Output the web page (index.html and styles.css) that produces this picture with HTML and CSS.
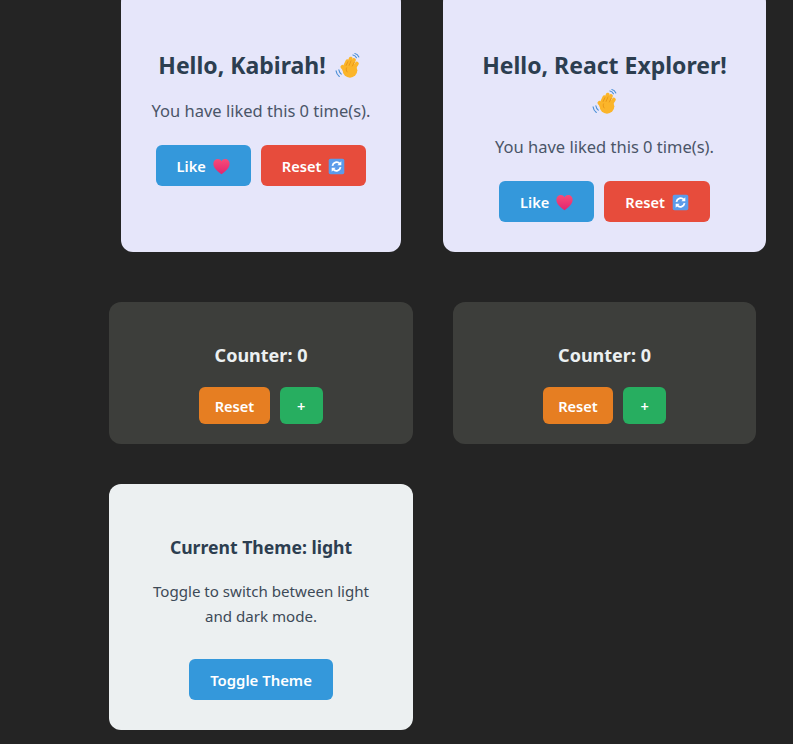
FILE: index.html
```html
<!DOCTYPE html>
<html>
<head>
    <title>React Explorer</title>
    <link rel="stylesheet" href="styles.css">
</head>
<body>
    <svg class="defs" width="0" height="0">
        <defs>
            <symbol id="wave" viewBox="0 0 24 24">
                <path d="M3.600 15.500c.3 1.700 1 3 2.200 4M1 16.500c.3 2.300 1.300 4 3 5.200" fill="none" stroke="#4a8fd6" stroke-width="1" stroke-linecap="round"/>
                <path d="M16.500 1.800c1.400.2 2.600 1.100 3.300 2.500M18.300.5c1.700.3 3 1.500 3.700 3.200" fill="none" stroke="#4a8fd6" stroke-width="1" stroke-linecap="round"/>
                <g fill="none" stroke="#fbb52a" stroke-width="3.500" stroke-linecap="round">
                    <path d="M8.500 14L11.500 7.500"/>
                    <path d="M11.500 13L14.500 5.200"/>
                    <path d="M14.500 13L17.500 6.500"/>
                    <path d="M17 14.500L20.200 9.800"/>
                    <path d="M11 18L6.800 12.800"/>
                </g>
                <circle cx="13.800" cy="16" r="6.800" fill="#fbb52a"/>
                <path d="M10.300 11.500l1.600-3.400M13 11.500l1.800-4.200M16 12l1.600-3.200M11.200 17.500c-1-1.200-1.100-2.600-.5-3.800" fill="none" stroke="#e38f12" stroke-width=".7" stroke-linecap="round"/>
            </symbol>
            <linearGradient id="heartFill" x1="0" y1="0" x2="0" y2="1">
                <stop offset="0" stop-color="#f84c78"/>
                <stop offset="1" stop-color="#e0256f"/>
            </linearGradient>
            <symbol id="heart" viewBox="0 0 24 24">
                <path d="M12 23C5.500 18 .5 13.500 .5 8 .5 4.200 3.500 1.500 6.800 1.500c2.300 0 4.100 1.100 5.200 3.100 1.100-2 2.900-3.100 5.200-3.100 3.300 0 6.300 2.700 6.300 6.500 0 5.500-5 10-11.500 15z" fill="url(#heartFill)"/>
            </symbol>
            <symbol id="refresh" viewBox="0 0 24 24">
                <rect x="1" y="1" width="22" height="22" rx="2.500" fill="#5b9bea"/>
                <path d="M6.300 11a6 6 0 0 1 10.300-3.200" fill="none" stroke="#fff" stroke-width="2.500"/>
                <path d="M18.800 4.700v5.600h-5.600z" fill="#fff"/>
                <path d="M17.700 13a6 6 0 0 1-10.300 3.200" fill="none" stroke="#fff" stroke-width="2.500"/>
                <path d="M5.200 19.300v-5.600h5.600z" fill="#fff"/>
            </symbol>
        </defs>
    </svg>

    <div class="app">
        <div class="card greeting greeting-short">
            <h2>Hello, Kabirah! <svg class="emoji emoji-wave"><use href="#wave"/></svg></h2>
            <p>You have liked this 0 time(s).</p>
            <div class="actions">
                <button class="btn btn-blue">Like <svg class="emoji"><use href="#heart"/></svg></button>
                <button class="btn btn-red">Reset <svg class="emoji"><use href="#refresh"/></svg></button>
            </div>
        </div>
        <div class="card greeting greeting-long">
            <h2>Hello, React Explorer! <svg class="emoji emoji-wave"><use href="#wave"/></svg></h2>
            <p>You have liked this 0 time(s).</p>
            <div class="actions">
                <button class="btn btn-blue">Like <svg class="emoji"><use href="#heart"/></svg></button>
                <button class="btn btn-red">Reset <svg class="emoji"><use href="#refresh"/></svg></button>
            </div>
        </div>

        <div class="card counter">
            <h3>Counter: 0</h3>
            <div class="actions">
                <button class="btn btn-small btn-orange">Reset</button>
                <button class="btn btn-small btn-green">+</button>
            </div>
        </div>
        <div class="card counter">
            <h3>Counter: 0</h3>
            <div class="actions">
                <button class="btn btn-small btn-orange">Reset</button>
                <button class="btn btn-small btn-green">+</button>
            </div>
        </div>

        <div class="card theme">
            <h3>Current Theme: light</h3>
            <p>Toggle to switch between light and dark mode.</p>
            <button class="btn btn-blue btn-toggle">Toggle Theme</button>
        </div>
    </div>
</body>
</html>
```

FILE: styles.css
```css
html, body {
    height: 100%;
    overflow: hidden;
}
body {
    margin: 0;
    background-color: #242424;
    font-family: "Noto Sans", "Open Sans", sans-serif;
    line-height: 1.6;
}
.defs {
    display: block;
}
/* page is scrolled a little in the screenshot */
.app {
    display: grid;
    grid-template-columns: 304px 303px;
    column-gap: 40px;
    row-gap: 40px;
    margin-top: -10px;
    padding-left: 109px;
}
.card {
    box-sizing: border-box;
    border-radius: 12px;
    text-align: center;
}
.greeting {
    justify-self: center;
    padding: 57px 24px 30px;
    margin-bottom: 10px;
    background-color: #e6e6fa;
    color: #2c3e50;
}
.greeting-short {
    width: 280px;
}
.greeting-long {
    width: 323px;
}
.greeting h2 {
    margin: 0 0 14px;
    font-size: 23px;
    line-height: 36px;
    font-weight: 700;
}
.greeting p {
    margin: 0 0 20px;
    font-size: 16.5px;
    line-height: 28px;
    color: #4a5568;
}
.counter {
    padding: 38px 20px 20px;
    background-color: #3d3e3b;
}
.counter h3 {
    margin: 0 0 17px;
    font-size: 18px;
    line-height: 30px;
    font-weight: 700;
    color: #ecf0f1;
}
.theme {
    padding: 48px 30px 30px;
    background-color: #ecf0f1;
    color: #2c3e50;
}
.theme h3 {
    margin: 0 0 17px;
    font-size: 17.6px;
    line-height: 30px;
    font-weight: 700;
}
.theme p {
    margin: 0 0 30px;
    font-size: 15.1px;
    line-height: 25px;
    color: #3d4a57;
}
.actions {
    display: flex;
    justify-content: center;
    gap: 10px;
}
.btn {
    height: 41px;
    padding: 0 21px;
    border: none;
    border-radius: 6px;
    color: white;
    font-family: inherit;
    font-size: 14.6px;
    font-weight: 600;
    cursor: pointer;
}
.btn-small {
    height: 37px;
    min-width: 43px;
    padding: 0 15.5px;
}
.btn-toggle {
    font-size: 14.9px;
}
.btn-blue {
    background-color: #3498db;
}
.btn-red {
    padding: 0 21.2px;
    background-color: #e74c3c;
}
.btn-orange {
    background-color: #e67e22;
}
.btn-green {
    background-color: #27ae60;
}
.emoji {
    width: 17px;
    height: 17px;
    margin-left: 3px;
    vertical-align: -3px;
}
.emoji-wave {
    width: 26px;
    height: 26px;
    margin-left: 3px;
    margin-right: 3px;
    vertical-align: -5px;
}
```
